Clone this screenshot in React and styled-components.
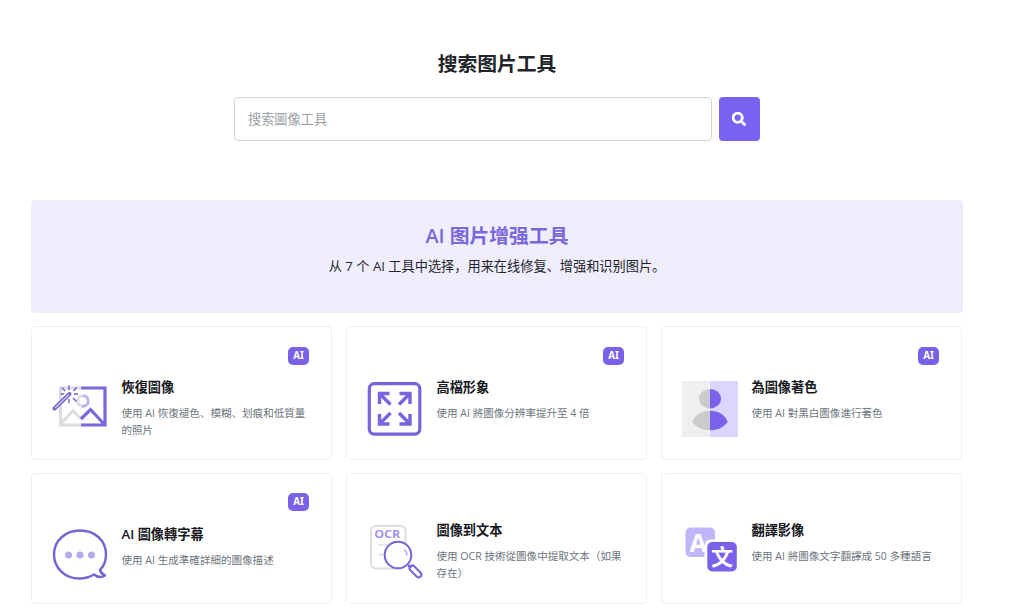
import React from "react"
import styled, { createGlobalStyle } from "styled-components"
import { FaSearch } from "react-icons/fa"

const GlobalStyle = createGlobalStyle`
  * {
    box-sizing: border-box;
  }

  body {
    margin: 0;
    background: #fff;
    color: #212529;
    font-family: "Open Sans", "Noto Sans CJK SC", sans-serif;
    overflow: hidden;
  }
`

const Page = styled.main`
  width: 932px;
  height: 610px;
  margin-left: 31px;
`

const Search = styled.section`
  height: 200px;
  padding-top: 49px;
`

const SearchTitle = styled.h2`
  margin: 0;
  font-size: 19.8px;
  font-weight: 700;
  line-height: 30px;
  text-align: center;
`

const SearchForm = styled.form`
  display: flex;
  gap: 7px;
  width: 526px;
  margin: 18.4px auto 0;
`

const SearchInput = styled.input`
  flex: 1;
  height: 43.4px;
  padding: 0 13px;
  border: 1px solid #d3d6d9;
  border-radius: 4px;
  outline: none;
  font-family: inherit;
  font-size: 13.2px;

  &::placeholder {
    color: #9a9fa3;
    opacity: 1;
  }
`

const SearchButton = styled.button`
  display: flex;
  align-items: center;
  justify-content: center;
  width: 41px;
  height: 43.4px;
  padding: 0 1px 1px 0;
  border: 0;
  border-radius: 4px;
  background: #7b61f0;
  color: #fff;
  font-size: 14px;

  & path {
    stroke: #fff;
    stroke-width: 18px;
  }
`

const Banner = styled.header`
  height: 113px;
  padding-top: 20px;
  border: 1px solid #ededf5;
  border-radius: 4px;
  background: #f0edfd;
  text-align: center;
`

const BannerTitle = styled.h2`
  margin: 0;
  color: #7b68dc;
  font-size: 19.8px;
  font-weight: 600;
  line-height: 29px;
`

const BannerText = styled.p`
  margin: 6px 0 0;
  font-size: 13.2px;
  line-height: 20px;
`

const Grid = styled.section`
  display: grid;
  grid-template-columns: repeat(3, 301.4px);
  grid-template-rows: 134px 131.5px;
  gap: 12.8px 13.6px;
  margin-top: 13px;
`

const Card = styled.article`
  padding: 19.5px 22.4px 0 20px;
  border: 1px solid #f0f0f1;
  border-radius: 4px;
  background: #fff;
`

const BadgeRow = styled.div`
  display: flex;
  justify-content: flex-end;
  height: ${(props) => (props.$empty ? "14px" : "18px")};
`

const Badge = styled.span`
  width: 21px;
  height: 18px;
  border-radius: 5px;
  background: #7b61e8;
  color: #fff;
  font-family: "Noto Sans", sans-serif;
  font-size: 9.8px;
  font-weight: 700;
  line-height: 17px;
  text-align: center;
`

const CardBody = styled.div`
  display: flex;
  gap: 13.5px;
  margin-top: 12.5px;
`

const Icon = styled.svg`
  flex: none;
  width: 56px;
  height: 56px;
  margin-top: 4px;
  overflow: visible;
`

const CardTitle = styled.h3`
  margin: 0;
  color: #16181b;
  font-family: "Open Sans", "Noto Sans CJK TC", sans-serif;
  font-size: 13.2px;
  font-weight: 600;
  line-height: 20px;
`

const CardText = styled.p`
  width: 190px;
  margin: 7.8px 0 0;
  color: #6c757d;
  font-size: 10.56px;
  line-height: 17.2px;
`

const RestoreIcon = () => (
  <Icon viewBox="0 0 56 56" fill="none">
    <path d="M29 7H8.500V44H29M8.500 43L21 30L29 38" stroke="#dcdcdf" strokeWidth="3" />
    <path d="M31 14.700a5 5 0 0 0 0 10.500" stroke="#dddde8" strokeWidth="3" />
    <path d="M31 14.700a5.200 5.200 0 0 1 0 10.500h-1" stroke="#bdb4f1" strokeWidth="3" />
    <path d="M29 7H53V44H29M29 38L38.500 28.500L52 43" stroke="#7b68dc" strokeWidth="3.200" />
    <path d="M2.500 27.500L17.500 13" stroke="#7463cc" strokeWidth="4" strokeLinecap="round" />
    <path d="M3 27L17 13.500" stroke="#d1caf3" strokeWidth="1.200" />
    <path
      d="M17 4.500V9M10 6.500L13 10M24.500 6.500L21.500 10M8.500 13H12M22 13H26M21 17L24.500 20.500M17 18V22"
      stroke="#7463cc"
      strokeWidth="1.500"
    />
  </Icon>
)

const UpscaleIcon = () => (
  <Icon viewBox="0 0 56 56" fill="none" stroke="#7864dc">
    <rect x="2.300" y="2.600" width="50.500" height="50.500" rx="5" strokeWidth="3.200" />
    <path
      d="M12.500 23V12.500H22.500M12.500 12.500L23.500 23.500M32.500 12.500H43V23M43 12.500L32 23.500M12.500 33V43H22.500M12.500 43L23.500 32M32.500 43H43V33M43 43L32 32"
      strokeWidth="3.400"
    />
  </Icon>
)

const ColorizeIcon = () => (
  <Icon viewBox="0 0 56 56">
    <path d="M0 0H28V56H0Z" fill="#efefef" />
    <path d="M28 0H56V56H28Z" fill="#dad6fd" />
    <path d="M28 8A11 9.700 0 0 0 28 27.400ZM28 29.700C20 29.700 13 33 10.300 41C15 47 21 49.300 28 49.300Z" fill="#cbcbcb" />
    <path d="M28 8A11 9.700 0 0 1 28 27.400ZM28 29.700C36 29.700 43 33 45.700 41C41 47 35 49.300 28 49.300Z" fill="#7b61ec" />
  </Icon>
)

const CaptionIcon = () => (
  <Icon viewBox="0 0 56 56">
    <path
      d="M42 46.500C37 49.500 32.500 50.500 27.500 50.500C13 50.500 2 40 2 26.500C2 12.500 13.500 2.500 28 2.500C43 2.500 54 12.500 54 26.500C54 32.500 52 38 48 42C49 45 50.500 46.500 53 47.500C49.500 49.500 45 49 42 46.500Z"
      fill="none"
      stroke="#7864d4"
      strokeWidth="2.500"
      strokeLinejoin="round"
    />
    <g fill="#b7abef">
      <circle cx="16.500" cy="27" r="3.500" />
      <circle cx="28" cy="27" r="3.500" />
      <circle cx="39.500" cy="27" r="3.500" />
    </g>
  </Icon>
)

const OcrLabel = styled.text`
  fill: #a193ea;
  font-family: "Open Sans", sans-serif;
  font-size: 11px;
  font-weight: 700;
`

const OcrIcon = () => (
  <Icon viewBox="0 0 56 56" fill="none">
    <rect x="4" y="2" width="34.500" height="42.500" rx="5" stroke="#dddde1" strokeWidth="2" />
    <OcrLabel x="7.200" y="14.200" textLength="26" lengthAdjust="spacingAndGlyphs">
      OCR
    </OcrLabel>
    <path d="M11.500 21H21M11.500 30.500H18" stroke="#dddde1" strokeWidth="1.700" />
    <circle cx="31" cy="31" r="13.300" fill="#fff" stroke="#7864d4" strokeWidth="2" />
    <path d="M37 25.500C39 27 40 29 40 31.500" stroke="#bdb4f1" strokeWidth="1.700" />
    <path d="M41 41L44 44" stroke="#7864d4" strokeWidth="2.200" />
    <rect x="41.200" y="44.700" width="14.500" height="5.500" rx="2.750" transform="rotate(45 48.450 47.450)" stroke="#7864d4" strokeWidth="2" />
  </Icon>
)

const Glyph = styled.text`
  fill: #fff;
  font-family: "Open Sans", "Noto Sans CJK TC", sans-serif;
  font-size: ${(props) => props.$size}px;
  font-weight: 700;
  text-anchor: middle;
`

const TranslateIcon = () => (
  <Icon viewBox="0 0 56 56">
    <rect x="3.500" y="3.500" width="29.500" height="29.500" rx="5" fill="#c0b6fa" />
    <Glyph x="16.200" y="27.500" $size={25}>
      A
    </Glyph>
    <rect x="22.500" y="15.500" width="35" height="35" rx="6" fill="#fff" />
    <rect x="25.300" y="18" width="29.500" height="29.500" rx="5" fill="#7b61ea" />
    <Glyph x="40" y="41" $size={22}>
      文
    </Glyph>
  </Icon>
)

const tools = [
  { title: "恢復圖像", text: "使用 AI 恢復褪色、模糊、划痕和低質量的照片", icon: RestoreIcon, ai: true },
  { title: "高檔形象", text: "使用 AI 將圖像分辨率提升至 4 倍", icon: UpscaleIcon, ai: true },
  { title: "為圖像著色", text: "使用 AI 對黑白圖像進行著色", icon: ColorizeIcon, ai: true },
  { title: "AI 圖像轉字幕", text: "使用 AI 生成準確詳細的圖像描述", icon: CaptionIcon, ai: true },
  { title: "圖像到文本", text: "使用 OCR 技術從圖像中提取文本（如果存在）", icon: OcrIcon },
  { title: "翻譯影像", text: "使用 AI 將圖像文字翻譯成 50 多種語言", icon: TranslateIcon },
]

function ToolCard({ tool }) {
  const ToolIcon = tool.icon
  return (
    <Card>
      <BadgeRow $empty={!tool.ai}>{tool.ai && <Badge>AI</Badge>}</BadgeRow>
      <CardBody>
        <ToolIcon />
        <div>
          <CardTitle>{tool.title}</CardTitle>
          <CardText>{tool.text}</CardText>
        </div>
      </CardBody>
    </Card>
  )
}

export default function App() {
  return (
    <Page>
      <GlobalStyle />
      <Search>
        <SearchTitle>搜索图片工具</SearchTitle>
        <SearchForm onSubmit={(e) => e.preventDefault()}>
          <SearchInput placeholder="搜索圖像工具" />
          <SearchButton aria-label="搜索">
            <FaSearch />
          </SearchButton>
        </SearchForm>
      </Search>
      <Banner>
        <BannerTitle>AI 图片增强工具</BannerTitle>
        <BannerText>从 7 个 AI 工具中选择，用来在线修复、增强和识别图片。</BannerText>
      </Banner>
      <Grid>
        {tools.map((tool) => (
          <ToolCard key={tool.title} tool={tool} />
        ))}
      </Grid>
    </Page>
  )
}
